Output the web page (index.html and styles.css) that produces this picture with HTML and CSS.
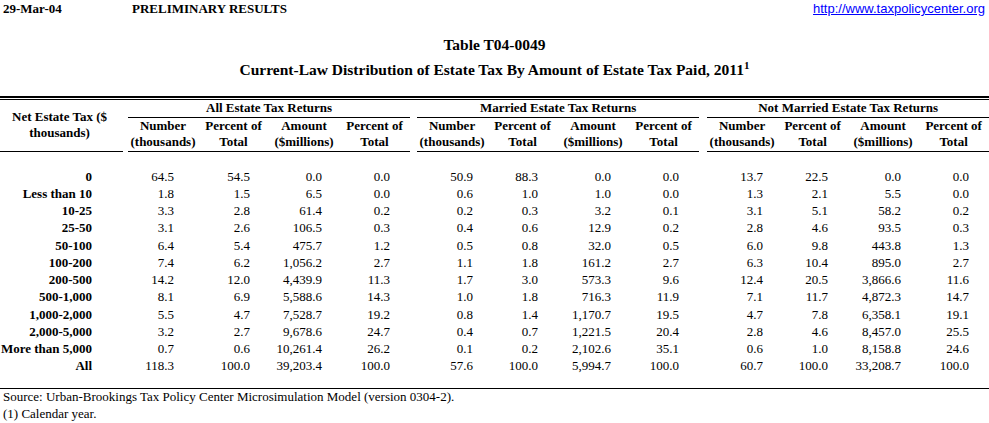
FILE: index.html
```html
<!DOCTYPE html>
<html>
<head>
<meta charset="utf-8">
<title>Table T04-0049</title>
<link rel="stylesheet" href="styles.css">
</head>
<body>
<div class="topbar">
  <span class="date">29-Mar-04</span>
  <span class="prelim">PRELIMINARY RESULTS</span>
  <a class="link" href="#">http://www.taxpolicycenter.org</a>
</div>
<h1 class="table-id">Table T04-0049</h1>
<h2 class="table-title">Current-Law Distribution of Estate Tax By Amount of Estate Tax Paid, 2011<sup>1</sup></h2>
<div class="rule"></div>
<table class="grid">
  <colgroup>
    <col class="c-lbl"><col class="c-sp1">
    <col class="c-n"><col class="c-p"><col class="c-a"><col class="c-q">
    <col class="c-sp2">
    <col class="c-n"><col class="c-p"><col class="c-a"><col class="c-q">
    <col class="c-sp3">
    <col class="c-n"><col class="c-p"><col class="c-a"><col class="c-q">
  </colgroup>
  <thead>
    <tr class="hrow">
      <th class="lblhead" rowspan="3">Net Estate Tax ($<br>thousands)</th>
      <th class="sp"></th>
      <th class="group" colspan="4">All Estate Tax Returns</th>
      <th class="sp"></th>
      <th class="group" colspan="4">Married Estate Tax Returns</th>
      <th class="sp"></th>
      <th class="group" colspan="4">Not Married Estate Tax Returns</th>
    </tr>
    <tr class="hrow">
      <th class="sp"></th>
      <th class="colhead">Number</th><th class="colhead">Percent of</th><th class="colhead">Amount</th><th class="colhead">Percent of</th>
      <th class="sp"></th>
      <th class="colhead">Number</th><th class="colhead">Percent of</th><th class="colhead">Amount</th><th class="colhead">Percent of</th>
      <th class="sp"></th>
      <th class="colhead">Number</th><th class="colhead">Percent of</th><th class="colhead">Amount</th><th class="colhead">Percent of</th>
    </tr>
    <tr class="hrow">
      <th class="sp"></th>
      <th class="colhead ul">(thousands)</th><th class="colhead ul">Total</th><th class="colhead ul">($millions)</th><th class="colhead ul">Total</th>
      <th class="sp"></th>
      <th class="colhead ul">(thousands)</th><th class="colhead ul">Total</th><th class="colhead ul">($millions)</th><th class="colhead ul">Total</th>
      <th class="sp"></th>
      <th class="colhead ul">(thousands)</th><th class="colhead ul">Total</th><th class="colhead ul">($millions)</th><th class="colhead ul">Total</th>
    </tr>
  </thead>
  <tbody>
    <tr class="blank"><td colspan="16"></td></tr>
    <tr class="drow"><th class="lbl">0</th><td></td><td class="n n1">64.5</td><td class="p p1">54.5</td><td class="a">0.0</td><td class="q">0.0</td><td></td><td class="n">50.9</td><td class="p">88.3</td><td class="a">0.0</td><td class="q">0.0</td><td></td><td class="n">13.7</td><td class="p">22.5</td><td class="a">0.0</td><td class="q">0.0</td></tr>
    <tr class="drow"><th class="lbl">Less than 10</th><td></td><td class="n n1">1.8</td><td class="p p1">1.5</td><td class="a">6.5</td><td class="q">0.0</td><td></td><td class="n">0.6</td><td class="p">1.0</td><td class="a">1.0</td><td class="q">0.0</td><td></td><td class="n">1.3</td><td class="p">2.1</td><td class="a">5.5</td><td class="q">0.0</td></tr>
    <tr class="drow"><th class="lbl">10-25</th><td></td><td class="n n1">3.3</td><td class="p p1">2.8</td><td class="a">61.4</td><td class="q">0.2</td><td></td><td class="n">0.2</td><td class="p">0.3</td><td class="a">3.2</td><td class="q">0.1</td><td></td><td class="n">3.1</td><td class="p">5.1</td><td class="a">58.2</td><td class="q">0.2</td></tr>
    <tr class="drow"><th class="lbl">25-50</th><td></td><td class="n n1">3.1</td><td class="p p1">2.6</td><td class="a">106.5</td><td class="q">0.3</td><td></td><td class="n">0.4</td><td class="p">0.6</td><td class="a">12.9</td><td class="q">0.2</td><td></td><td class="n">2.8</td><td class="p">4.6</td><td class="a">93.5</td><td class="q">0.3</td></tr>
    <tr class="drow"><th class="lbl">50-100</th><td></td><td class="n n1">6.4</td><td class="p p1">5.4</td><td class="a">475.7</td><td class="q">1.2</td><td></td><td class="n">0.5</td><td class="p">0.8</td><td class="a">32.0</td><td class="q">0.5</td><td></td><td class="n">6.0</td><td class="p">9.8</td><td class="a">443.8</td><td class="q">1.3</td></tr>
    <tr class="drow"><th class="lbl">100-200</th><td></td><td class="n n1">7.4</td><td class="p p1">6.2</td><td class="a">1,056.2</td><td class="q">2.7</td><td></td><td class="n">1.1</td><td class="p">1.8</td><td class="a">161.2</td><td class="q">2.7</td><td></td><td class="n">6.3</td><td class="p">10.4</td><td class="a">895.0</td><td class="q">2.7</td></tr>
    <tr class="drow"><th class="lbl">200-500</th><td></td><td class="n n1">14.2</td><td class="p p1">12.0</td><td class="a">4,439.9</td><td class="q">11.3</td><td></td><td class="n">1.7</td><td class="p">3.0</td><td class="a">573.3</td><td class="q">9.6</td><td></td><td class="n">12.4</td><td class="p">20.5</td><td class="a">3,866.6</td><td class="q">11.6</td></tr>
    <tr class="drow"><th class="lbl">500-1,000</th><td></td><td class="n n1">8.1</td><td class="p p1">6.9</td><td class="a">5,588.6</td><td class="q">14.3</td><td></td><td class="n">1.0</td><td class="p">1.8</td><td class="a">716.3</td><td class="q">11.9</td><td></td><td class="n">7.1</td><td class="p">11.7</td><td class="a">4,872.3</td><td class="q">14.7</td></tr>
    <tr class="drow"><th class="lbl">1,000-2,000</th><td></td><td class="n n1">5.5</td><td class="p p1">4.7</td><td class="a">7,528.7</td><td class="q">19.2</td><td></td><td class="n">0.8</td><td class="p">1.4</td><td class="a">1,170.7</td><td class="q">19.5</td><td></td><td class="n">4.7</td><td class="p">7.8</td><td class="a">6,358.1</td><td class="q">19.1</td></tr>
    <tr class="drow"><th class="lbl">2,000-5,000</th><td></td><td class="n n1">3.2</td><td class="p p1">2.7</td><td class="a">9,678.6</td><td class="q">24.7</td><td></td><td class="n">0.4</td><td class="p">0.7</td><td class="a">1,221.5</td><td class="q">20.4</td><td></td><td class="n">2.8</td><td class="p">4.6</td><td class="a">8,457.0</td><td class="q">25.5</td></tr>
    <tr class="drow"><th class="lbl">More than 5,000</th><td></td><td class="n n1">0.7</td><td class="p p1">0.6</td><td class="a">10,261.4</td><td class="q">26.2</td><td></td><td class="n">0.1</td><td class="p">0.2</td><td class="a">2,102.6</td><td class="q">35.1</td><td></td><td class="n">0.6</td><td class="p">1.0</td><td class="a">8,158.8</td><td class="q">24.6</td></tr>
    <tr class="drow"><th class="lbl">All</th><td></td><td class="n n1">118.3</td><td class="p p1">100.0</td><td class="a">39,203.4</td><td class="q">100.0</td><td></td><td class="n">57.6</td><td class="p">100.0</td><td class="a">5,994.7</td><td class="q">100.0</td><td></td><td class="n">60.7</td><td class="p">100.0</td><td class="a">33,208.7</td><td class="q">100.0</td></tr>
    <tr class="gap"><td colspan="16"></td></tr>
  </tbody>
  <tfoot>
    <tr class="note first"><td colspan="16">Source: Urban-Brookings Tax Policy Center Microsimulation Model (version 0304-2).</td></tr>
    <tr class="note"><td colspan="16">(1) Calendar year.</td></tr>
  </tfoot>
</table>
</body>
</html>
```
FILE: styles.css
```css
html, body {
  margin: 0;
  padding: 0;
  background: #ffffff;
  color: #000000;
}

body {
  width: 989px;
  font-family: "Liberation Serif", "Times New Roman", serif;
  font-size: 13px;
}

.topbar {
  display: flex;
  align-items: center;
  height: 17px;
  font-weight: bold;
}

.date {
  width: 128px;
  padding-left: 3px;
  box-sizing: border-box;
}

.prelim {
  padding-left: 4px;
}

.link {
  margin-left: auto;
  padding-right: 4px;
  font-family: "Liberation Sans", Arial, sans-serif;
  font-weight: normal;
  font-size: 13px;
  color: #0000ff;
  text-decoration: underline;
}

.table-id {
  margin: 18px 0 0 0;
  height: 20px;
  line-height: 20px;
  font-size: 15.5px;
  font-weight: bold;
  text-align: center;
}

.table-title {
  margin: 5px 0 0 0;
  height: 20px;
  line-height: 20px;
  font-size: 15.5px;
  font-weight: bold;
  text-align: center;
}

.table-title sup {
  font-size: 11px;
  line-height: 0;
  vertical-align: 6px;
}

.rule {
  margin-top: 16px;
  height: 1px;
  border-top: 2px solid #000;
  border-bottom: 1px solid #000;
}

.grid {
  width: 989px;
  table-layout: fixed;
  border-collapse: collapse;
  border-spacing: 0;
}

.c-lbl { width: 123px; }
.c-sp1 { width: 5px; }
.c-sp2 { width: 7px; }
.c-sp3 { width: 8px; }
.c-n { width: 70px; }
.c-p { width: 71px; }
.c-a { width: 70px; }
.c-q { width: 71px; }

.grid th,
.grid td {
  padding: 0;
  font-size: 13px;
  line-height: 16px;
  white-space: nowrap;
  overflow: visible;
}

.grid th {
  font-weight: bold;
}

.hrow {
  height: 17px;
}

.grid .lblhead {
  text-align: center;
  vertical-align: middle;
  border-bottom: 1px solid #000;
  padding-right: 4px;
}

.grid .group {
  text-align: center;
  border-bottom: 1px solid #000;
}

.grid .colhead {
  text-align: center;
  vertical-align: middle;
}

.grid .colhead.ul {
  border-bottom: 1px solid #000;
}

.blank {
  height: 17px;
}

.drow {
  height: 17.25px;
}

.grid .lbl {
  text-align: right;
  padding-right: 31px;
}

.grid .n,
.grid .p,
.grid .a,
.grid .q {
  text-align: right;
  font-weight: normal;
}

.grid .n { padding-right: 14px; }
.grid .p { padding-right: 20px; }
.grid .a { padding-right: 17px; }
.grid .q { padding-right: 20px; }
.grid .n1 { padding-right: 24px; }
.grid .p1 { padding-right: 19px; }

.gap {
  height: 13px;
}

.note {
  height: 17px;
}

.grid .note td {
  padding-left: 3px;
  text-align: left;
}

.grid .note.first td {
  border-top: 1px solid #000;
}
```
